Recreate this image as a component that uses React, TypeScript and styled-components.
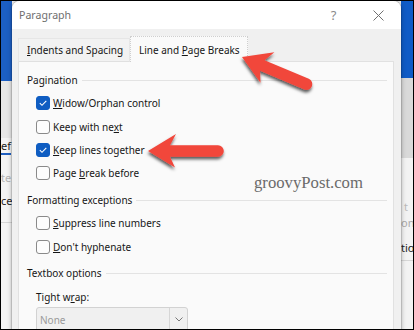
import React from 'react';
import styled, { createGlobalStyle } from 'styled-components';

const GlobalStyle = createGlobalStyle`
  html, body {
    margin: 0;
    padding: 0;
    background: #fff;
  }
  body {
    font-family: "Noto Sans", "Open Sans", sans-serif;
  }
`;

const Frame = styled.div`
  position: relative;
  width: 414px;
  height: 330px;
  box-sizing: border-box;
  border: 1px solid #000;
  overflow: hidden;
  display: grid;
  grid-template-columns: 11px 389px 12px;
  background: #f3f3f3;
`;

const Backdrop = styled.div`
  display: flex;
  flex-direction: column;
  overflow: hidden;
  font-size: 11px;
  white-space: nowrap;
`;

const Band = styled.div<{ $h?: number; $bg: string }>`
  flex: ${(p) => (p.$h ? 'none' : '1')};
  height: ${(p) => (p.$h ? `${p.$h}px` : 'auto')};
  background: ${(p) => p.$bg};
  display: flex;
  flex-direction: column;
`;

const Fragment = styled.div<{ $color?: string; $h: number; $indent?: number }>`
  flex: none;
  height: ${(p) => p.$h}px;
  line-height: ${(p) => p.$h}px;
  color: ${(p) => p.$color || '#222'};
  padding-left: ${(p) => p.$indent || 0}px;
`;

const Underline = styled.div`
  flex: none;
  height: 2px;
  background: #1f5fc0;
  margin-right: 1px;
`;

const Rule = styled.div`
  flex: none;
  height: 1px;
  background: #d6d6d6;
`;

const Dialog = styled.div`
  position: relative;
  z-index: 1;
  display: flex;
  flex-direction: column;
  background: #f0f0f0;
  border-radius: 8px 8px 0 0;
  box-shadow: 0 0 0 1px rgba(0, 0, 0, 0.1), 0 0 5px rgba(0, 0, 0, 0.35);
  color: #161616;
  font-size: 10px;
  white-space: nowrap;
`;

const TitleBar = styled.div`
  flex: none;
  height: 28px;
  display: flex;
  align-items: center;
  padding-left: 7px;
  background: #fff;
  border-radius: 8px 8px 0 0;
`;

const Title = styled.div`
  font-size: 10.6px;
  color: #6e6e6e;
`;

const TitleControls = styled.div`
  margin-left: auto;
  display: flex;
`;

const TitleButton = styled.div`
  width: 45px;
  height: 28px;
  display: flex;
  align-items: center;
  justify-content: center;
  color: #8a8a8a;
  font-size: 13px;
`;

const Body = styled.div`
  flex: 1;
  display: flex;
  flex-direction: column;
  padding: 7px 7px 0 6px;
`;

const TabRow = styled.div`
  display: flex;
  align-items: flex-end;
  height: 26px;
  margin-bottom: -1px;
`;

const Tab = styled.div<{ $active?: boolean }>`
  position: relative;
  z-index: ${(p) => (p.$active ? 1 : 0)};
  box-sizing: border-box;
  width: ${(p) => (p.$active ? 118 : 112)}px;
  height: ${(p) => (p.$active ? 26 : 24)}px;
  padding-left: 8px;
  display: flex;
  align-items: center;
  background: ${(p) => (p.$active ? '#fafafa' : '#f2f2f2')};
  border: 1px ${(p) => (p.$active ? 'dotted #cfcfcf' : 'solid #e6e6e6')};
  border-bottom: ${(p) => (p.$active ? 'none' : '1px solid #e0e0e0')};
`;

const Panel = styled.div`
  flex: 1;
  background: #fafafa;
  border: 1px solid #e1e1e1;
  padding: 8px 6px 0 8px;
`;

const Section = styled.div`
  & + & {
    margin-top: 5px;
  }
`;

const SectionHeader = styled.div`
  height: 20px;
  display: flex;
  align-items: center;
  &::after {
    content: '';
    flex: 1;
    height: 1px;
    margin-left: 4px;
    background: #e3e3e3;
  }
`;

const Options = styled.div`
  padding: 1.5px 0 0 9px;
`;

const OptionRow = styled.div`
  height: 23.4px;
  display: flex;
  align-items: center;
  gap: 3px;
`;

const Box = styled.div<{ $checked?: boolean }>`
  box-sizing: border-box;
  width: 14px;
  height: 14px;
  border-radius: 3px;
  background: ${(p) => (p.$checked ? '#0f5dc2' : '#fdfdfd')};
  border: 1px solid ${(p) => (p.$checked ? '#0f5dc2' : '#8a8a8a')};
  display: flex;
  align-items: center;
  justify-content: center;
`;

const FieldLabel = styled.div`
  height: 20px;
  margin: 3.6px 0 0 9px;
  display: flex;
  align-items: center;
`;

const Select = styled.div`
  box-sizing: border-box;
  width: 152px;
  height: 26px;
  margin-left: 9px;
  display: flex;
  background: #f0f0f0;
  border: 1px solid #d2d2d2;
  border-radius: 3px;
  color: #9a9a9a;
`;

const SelectValue = styled.div`
  flex: 1;
  display: flex;
  align-items: center;
  padding-left: 3px;
  border-right: 1px solid #d6d6d6;
`;

const SelectButton = styled.div`
  width: 17px;
  display: flex;
  align-items: center;
  justify-content: center;
`;

const Overlay = styled.svg`
  position: absolute;
  left: -1px;
  top: -1px;
  width: 414px;
  height: 330px;
  z-index: 5;
  pointer-events: none;
`;

const Watermark = styled.div`
  position: absolute;
  left: 253px;
  top: 172px;
  z-index: 4;
  font-family: "Liberation Serif", "DejaVu Serif", serif;
  font-size: 16.7px;
  color: #6a6a6a;
`;

const Check = () => (
  <svg width="10" height="10" viewBox="0 0 10 10">
    <path d="M1.8 5.2 L4 7.3 L8.3 2.8" fill="none" stroke="#fff" strokeWidth="1.1" />
  </svg>
);

const Option: React.FC<{ checked?: boolean; children: React.ReactNode }> = ({ checked, children }) => (
  <OptionRow>
    <Box $checked={checked}>{checked && <Check />}</Box>
    <span>{children}</span>
  </OptionRow>
);

const arrowPath =
  'M0 0 L28 -17 L22 -5.8 L70 -5.8 A5.8 5.8 0 0 1 70 5.8 L22 5.8 L27 16.5 Z';

const App: React.FC = () => (
  <>
    <GlobalStyle />
    <Frame>
      <Backdrop>
        <Band $h={80} $bg="#1c5fc4" />
        <Band $h={57} $bg="#e7e7e7" />
        <Band $bg="#f4f4f4">
          <Fragment $h={15}>ef</Fragment>
          <Underline />
          <Fragment $h={11}> </Fragment>
          <Fragment $color="#b4b4b4" $h={24}>te</Fragment>
          <Fragment $h={22}>ce</Fragment>
          <Fragment $h={10}> </Fragment>
          <Rule />
        </Band>
      </Backdrop>

      <Dialog>
        <TitleBar>
          <Title>Paragraph</Title>
          <TitleControls>
            <TitleButton>?</TitleButton>
            <TitleButton>
              <svg width="11" height="11" viewBox="0 0 11 11">
                <path d="M0.5 0.5 L10.5 10.5 M10.5 0.5 L0.5 10.5" stroke="#707070" strokeWidth="1" />
              </svg>
            </TitleButton>
          </TitleControls>
        </TitleBar>
        <Body>
          <TabRow>
            <Tab>
              <span><u>I</u>ndents and Spacing</span>
            </Tab>
            <Tab $active>
              <span>Line and <u>P</u>age Breaks</span>
            </Tab>
          </TabRow>
          <Panel>
            <Section>
              <SectionHeader>Pagination</SectionHeader>
              <Options>
                <Option checked><u>W</u>idow/Orphan control</Option>
                <Option>Keep with ne<u>x</u>t</Option>
                <Option checked><u>K</u>eep lines together</Option>
                <Option>Page <u>b</u>reak before</Option>
              </Options>
            </Section>
            <Section>
              <SectionHeader>Formatting exceptions</SectionHeader>
              <Options>
                <Option><u>S</u>uppress line numbers</Option>
                <Option><u>D</u>on't hyphenate</Option>
              </Options>
            </Section>
            <Section>
              <SectionHeader>Textbox options</SectionHeader>
              <FieldLabel>Tight w<u>r</u>ap:</FieldLabel>
              <Select>
                <SelectValue>None</SelectValue>
                <SelectButton>
                  <svg width="8" height="5" viewBox="0 0 8 5">
                    <path d="M0.5 0.5 L4 4 L7.5 0.5" fill="none" stroke="#777" strokeWidth="1" />
                  </svg>
                </SelectButton>
              </Select>
            </Section>
          </Panel>
        </Body>
      </Dialog>

      <Backdrop>
        <Band $h={77} $bg="#0f5bc6" />
        <Band $h={80} $bg="#d9d9d9" />
        <Band $bg="#f3f3f3">
          <Fragment $h={42}> </Fragment>
          <Fragment $color="#bbb" $h={14} $indent={3}>t</Fragment>
          <Fragment $color="#aaa" $h={18}>on</Fragment>
          <Fragment $h={4}> </Fragment>
          <Fragment $h={24}>tio</Fragment>
          <Rule />
        </Band>
      </Backdrop>

      <Watermark>groovyPost.com</Watermark>

      <Overlay viewBox="0 0 414 330">
        <defs>
          <filter id="arrowShadow" x="-20%" y="-40%" width="140%" height="180%">
            <feDropShadow dx="-0.5" dy="2.5" stdDeviation="1.5" floodColor="#000" floodOpacity="0.65" />
          </filter>
        </defs>
        <g filter="url(#arrowShadow)" fill="#f1463b">
          <path d={arrowPath} transform="translate(242 57) rotate(22.8)" />
          <path d={arrowPath} transform="translate(148 151)" />
        </g>
      </Overlay>
    </Frame>
  </>
);

export default App;
